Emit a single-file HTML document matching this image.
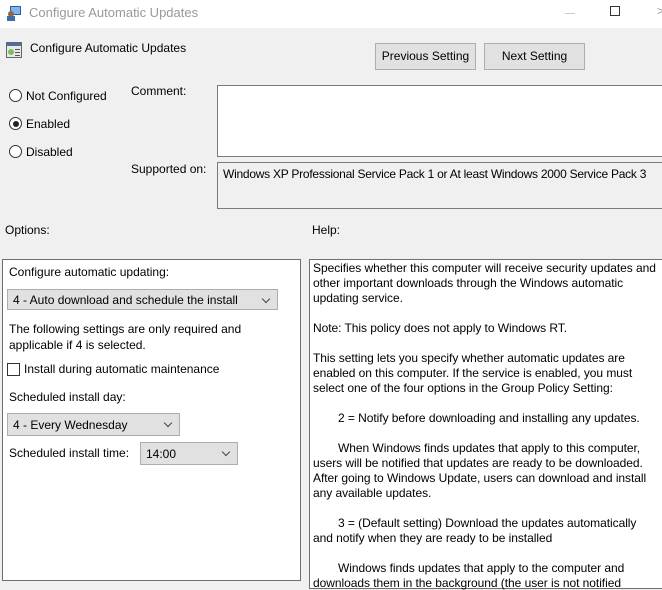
<!DOCTYPE html>
<html><head><style>
*{margin:0;padding:0;box-sizing:border-box}
body{width:662px;height:582px;overflow:hidden;background:#f0f0f0;font-family:"Liberation Sans",sans-serif;font-size:12px;color:#000;position:relative}
.a{position:absolute;white-space:nowrap}
.box{position:absolute;background:#fff;border:1px solid #828790}
.btn{position:absolute;background:#e1e1e1;border:1px solid #adadad;text-align:center;line-height:24px}
.sel{position:absolute;background:#e1e1e1;border:1px solid #adadad;padding-left:5px;line-height:20px}
.sel:after{content:"";position:absolute;right:8px;top:6px;width:5px;height:5px;border-right:1px solid #444;border-bottom:1px solid #444;transform:rotate(45deg)}
.rad{position:absolute;width:13px;height:13px;border:1px solid #333;border-radius:50%;background:#fff}
.h{position:absolute;left:313px;white-space:nowrap;letter-spacing:-0.05px}
</style></head><body>
<div class="a" style="left:0;top:0;width:662px;height:28px;background:#fff"></div>
<svg class="a" style="left:6px;top:5px" width="16" height="16"><rect x="4" y="1" width="11" height="9" fill="#2a5db0"/><rect x="5" y="2" width="9" height="7" fill="#7fb4ec"/><circle cx="5" cy="9" r="3" fill="#8a6a4a"/><rect x="1" y="11" width="8" height="5" fill="#3a6ea5"/></svg>
<div class="a" style="left:29px;top:5px;color:#999;font-size:13px">Configure Automatic Updates</div>
<div class="a" style="left:565px;top:13px;width:10px;height:1px;background:#ccc"></div>
<div class="a" style="left:610px;top:6px;width:10px;height:10px;border:1px solid #333"></div>
<div class="a" style="left:657px;top:4px;color:#999">&gt;</div>

<svg class="a" style="left:6px;top:42px" width="16" height="16"><rect x="0.5" y="0.5" width="15" height="15" fill="#e8e8e8" stroke="#666"/><rect x="1" y="1" width="14" height="3" fill="#4a6fa5"/><circle cx="5" cy="10" r="3" fill="#7bbf5a"/><rect x="9" y="7" width="5" height="1" fill="#555"/><rect x="9" y="10" width="5" height="1" fill="#555"/><rect x="9" y="13" width="5" height="1" fill="#555"/></svg>
<div class="a" style="left:30px;top:41px">Configure Automatic Updates</div>
<div class="btn" style="left:375px;top:43px;width:101px;height:27px">Previous Setting</div>
<div class="btn" style="left:484px;top:43px;width:101px;height:27px">Next Setting</div>

<div class="rad" style="left:9px;top:89px"></div><div class="a" style="left:26px;top:89px">Not Configured</div>
<div class="rad" style="left:9px;top:117px"></div><div class="a" style="left:13px;top:121px;width:6px;height:6px;border-radius:50%;background:#222"></div><div class="a" style="left:26px;top:117px">Enabled</div>
<div class="rad" style="left:9px;top:145px"></div><div class="a" style="left:26px;top:145px">Disabled</div>

<div class="a" style="left:131px;top:84px">Comment:</div>
<div class="box" style="left:217px;top:85px;width:450px;height:72px;border-color:#7a7a7a"></div>
<div class="a" style="left:131px;top:162px">Supported on:</div>
<div class="a" style="left:217px;top:162px;width:450px;height:47px;border:1px solid #7a7a7a;background:#f0f0f0"></div>
<div class="a" style="left:223px;top:167px;letter-spacing:-0.25px">Windows XP Professional Service Pack 1 or At least Windows 2000 Service Pack 3</div>

<div class="a" style="left:5px;top:223px">Options:</div>
<div class="a" style="left:312px;top:223px">Help:</div>

<div class="box" style="left:2px;top:259px;width:299px;height:322px;border-color:#6e6e6e"></div>
<div class="a" style="left:9px;top:265px">Configure automatic updating:</div>
<div class="sel" style="left:7px;top:289px;width:271px;height:21px">4 - Auto download and schedule the install</div>
<div class="a" style="left:9px;top:321px;line-height:16px">The following settings are only required and<br>applicable if 4 is selected.</div>
<div class="a" style="left:7px;top:363px;width:13px;height:13px;border:1px solid #333;background:#fff"></div>
<div class="a" style="left:24px;top:362px">Install during automatic maintenance</div>
<div class="a" style="left:9px;top:390px">Scheduled install day:</div>
<div class="sel" style="left:7px;top:413px;width:173px;height:23px;line-height:22px">4 - Every Wednesday</div>
<div class="a" style="left:9px;top:446px">Scheduled install time:</div>
<div class="sel" style="left:140px;top:442px;width:98px;height:23px;line-height:22px">14:00</div>

<div class="box" style="left:309px;top:259px;width:360px;height:330px;border-color:#6e6e6e"></div>
<div class="h" style="top:261px">Specifies whether this computer will receive security updates and</div>
<div class="h" style="top:276px">other important downloads through the Windows automatic</div>
<div class="h" style="top:291px">updating service.</div>
<div class="h" style="top:321px">Note: This policy does not apply to Windows RT.</div>
<div class="h" style="top:351px">This setting lets you specify whether automatic updates are</div>
<div class="h" style="top:366px">enabled on this computer. If the service is enabled, you must</div>
<div class="h" style="top:381px">select one of the four options in the Group Policy Setting:</div>
<div class="h" style="top:411px;left:338px">2 = Notify before downloading and installing any updates.</div>
<div class="h" style="top:441px;left:338px">When Windows finds updates that apply to this computer,</div>
<div class="h" style="top:456px">users will be notified that updates are ready to be downloaded.</div>
<div class="h" style="top:471px">After going to Windows Update, users can download and install</div>
<div class="h" style="top:486px">any available updates.</div>
<div class="h" style="top:516px;left:338px">3 = (Default setting) Download the updates automatically</div>
<div class="h" style="top:531px">and notify when they are ready to be installed</div>
<div class="h" style="top:561px;left:338px">Windows finds updates that apply to the computer and</div>
<div class="h" style="top:576px">downloads them in the background (the user is not notified</div>
</body></html>
